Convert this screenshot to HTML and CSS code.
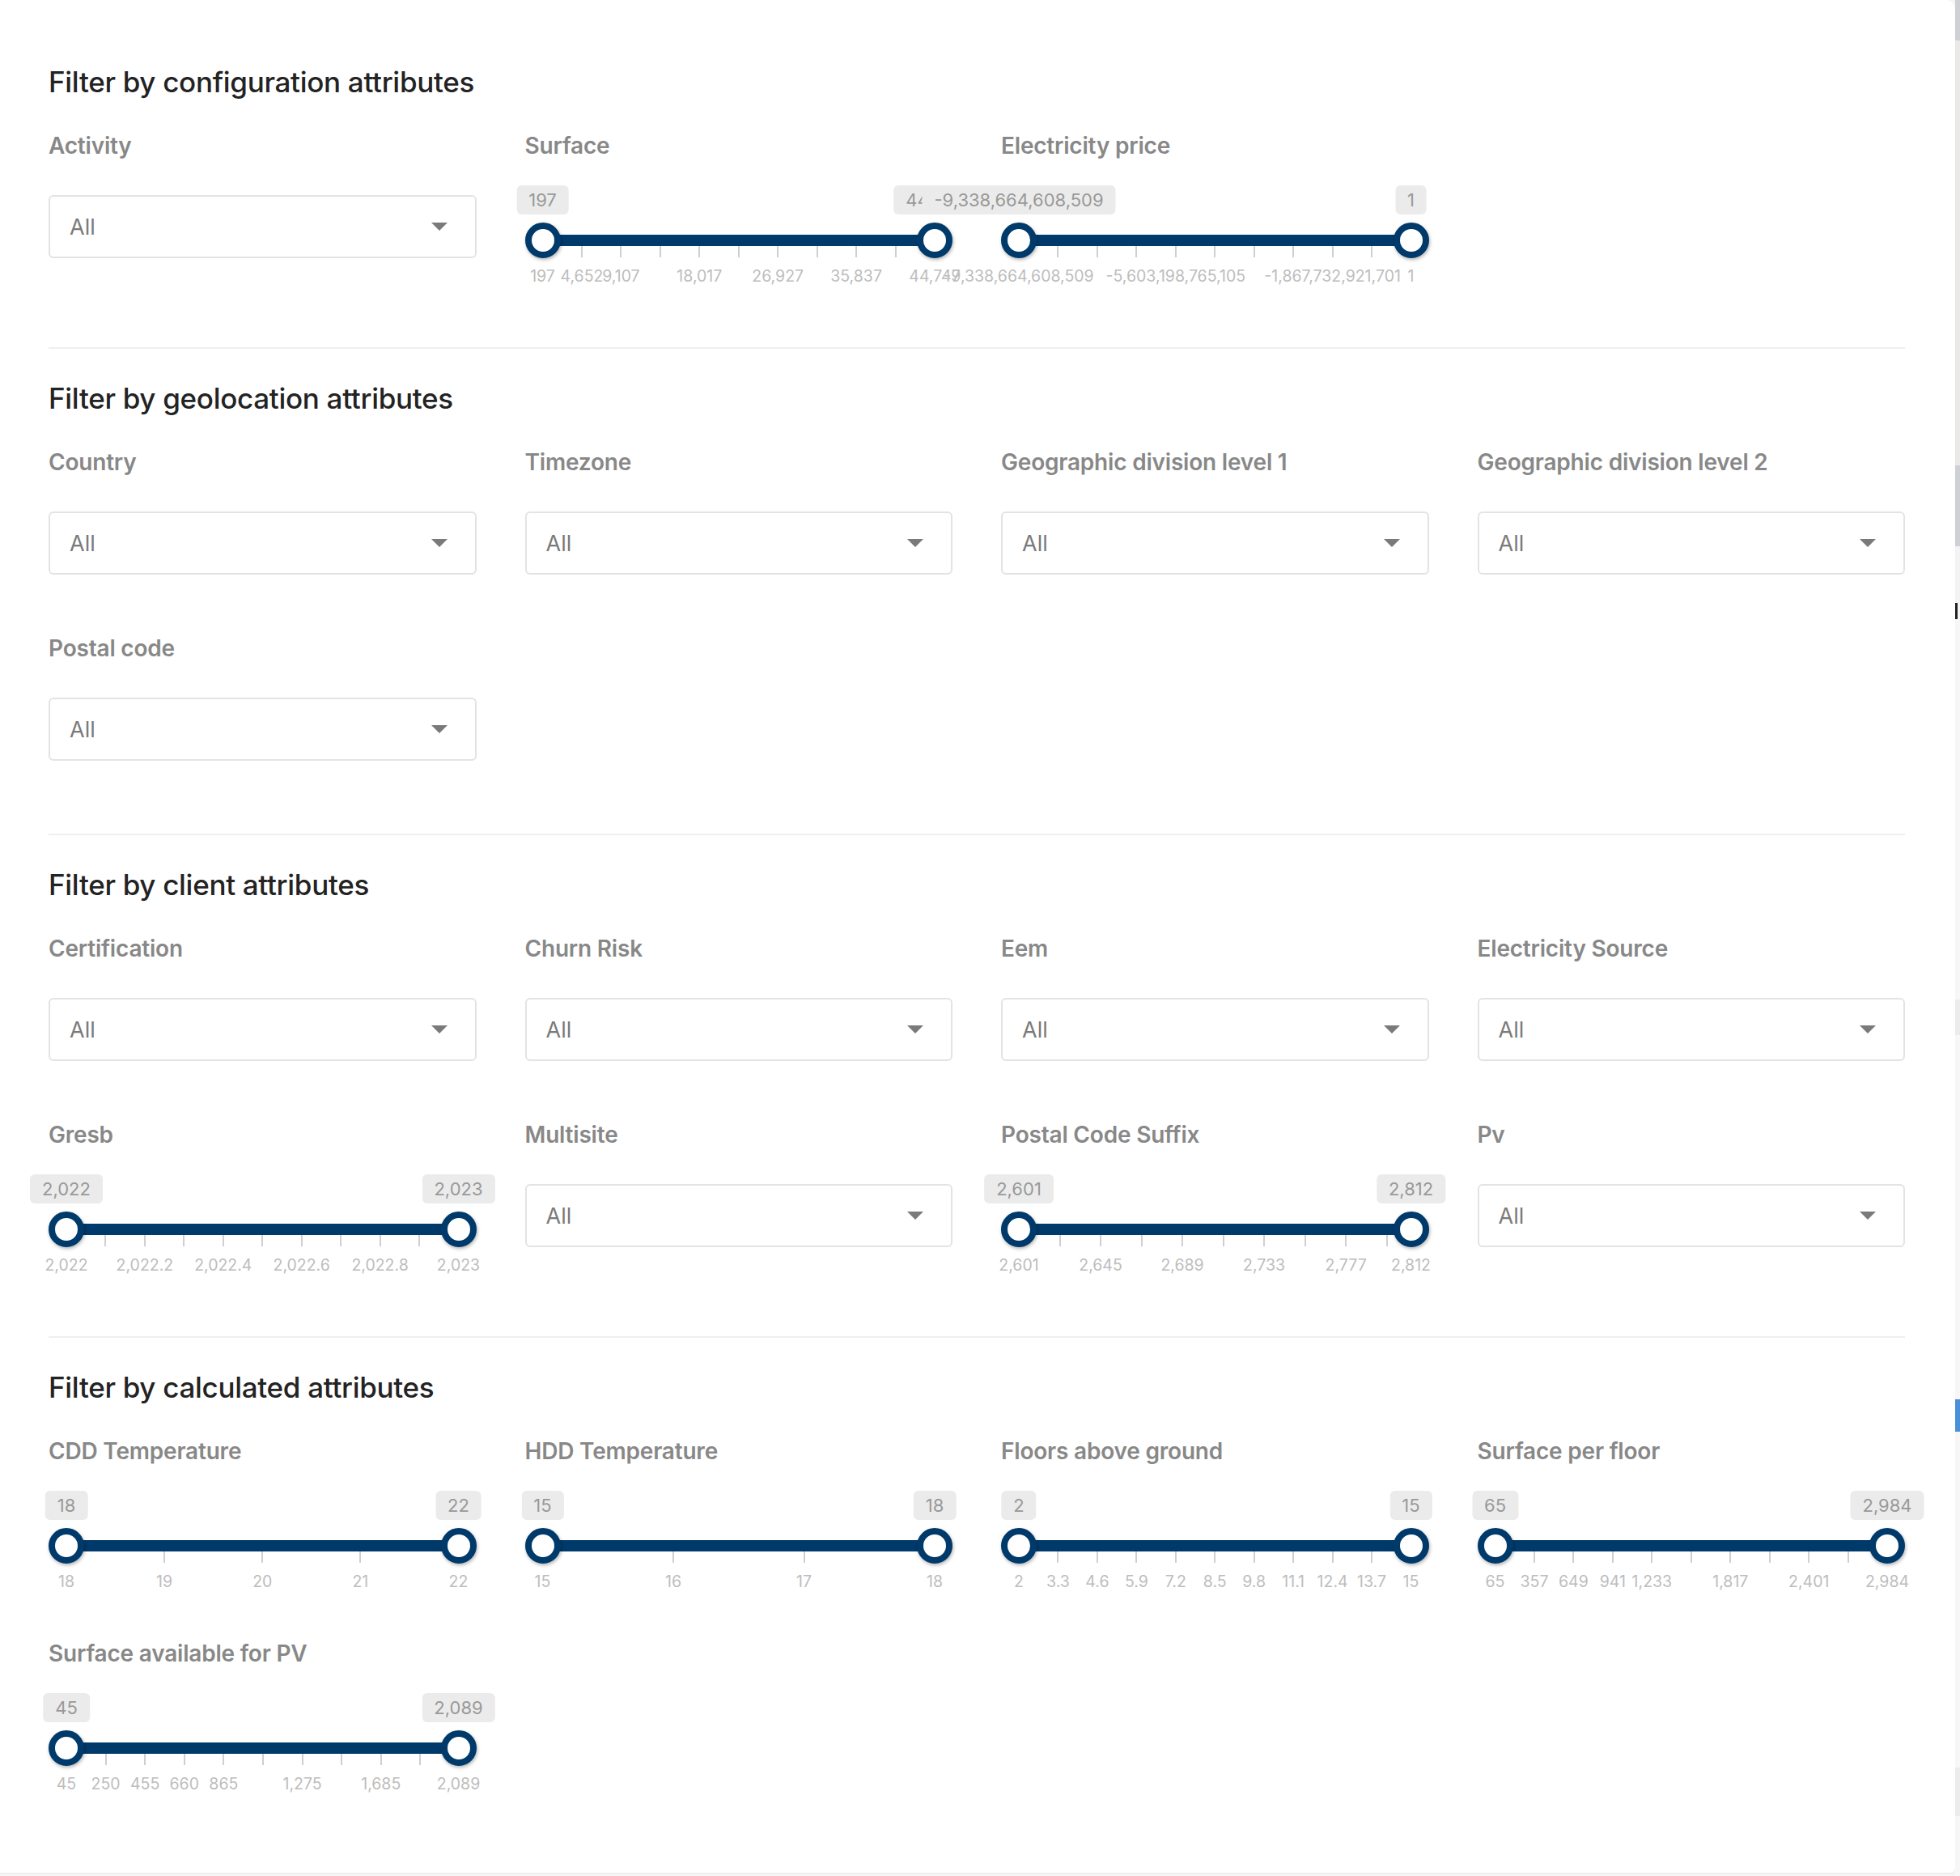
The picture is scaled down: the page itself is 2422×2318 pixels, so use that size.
FILE: index.html
```html
<!DOCTYPE html>
<html lang="en">
<head>
<meta charset="utf-8">
<title>Filters</title>
<link rel="stylesheet" href="styles.css">
</head>
<body>
<div class="page">
<main class="panel">

<section class="group">
  <h2>Filter by configuration attributes</h2>
  <div class="grid">
    <div class="field">
      <div class="label">Activity</div>
      <div class="select"><span>All</span><svg class="caret" width="20" height="10" viewBox="0 0 20 10"><path d="M0 0H20L10 10Z"/></svg></div>
    </div>
    <div class="field">
      <div class="label">Surface</div>
      <div class="slider"><div class="rail"><div class="track"></div>
        <span class="tick" style="left:0%"></span><span class="tick" style="left:10%"></span><span class="tick" style="left:20%"></span><span class="tick" style="left:30%"></span><span class="tick" style="left:40%"></span><span class="tick" style="left:50%"></span><span class="tick" style="left:60%"></span><span class="tick" style="left:70%"></span><span class="tick" style="left:80%"></span><span class="tick" style="left:90%"></span><span class="tick" style="left:100%"></span>
        <span class="mark" style="left:0%">197</span><span class="mark" style="left:10%">4,652</span><span class="mark" style="left:20%">9,107</span><span class="mark" style="left:40%">18,017</span><span class="mark" style="left:60%">26,927</span><span class="mark" style="left:80%">35,837</span><span class="mark" style="left:100%">44,747</span>
        <span class="handle" style="left:0%"></span><span class="handle" style="left:100%"></span>
        <span class="tip" style="left:0%">197</span><span class="tip" style="left:100%">44,747</span>
      </div></div>
    </div>
    <div class="field">
      <div class="label">Electricity price</div>
      <div class="slider"><div class="rail"><div class="track"></div>
        <span class="tick" style="left:0%"></span><span class="tick" style="left:10%"></span><span class="tick" style="left:20%"></span><span class="tick" style="left:30%"></span><span class="tick" style="left:40%"></span><span class="tick" style="left:50%"></span><span class="tick" style="left:60%"></span><span class="tick" style="left:70%"></span><span class="tick" style="left:80%"></span><span class="tick" style="left:90%"></span><span class="tick" style="left:100%"></span>
        <span class="mark" style="left:0%">-9,338,664,608,509</span><span class="mark" style="left:40%">-5,603,198,765,105</span><span class="mark" style="left:80%">-1,867,732,921,701</span><span class="mark" style="left:100%">1</span>
        <span class="handle" style="left:0%"></span><span class="handle" style="left:100%"></span>
        <span class="tip" style="left:0%">-9,338,664,608,509</span><span class="tip" style="left:100%">1</span>
      </div></div>
    </div>
  </div>
</section>

<hr class="divider">

<section class="group">
  <h2>Filter by geolocation attributes</h2>
  <div class="grid">
    <div class="field">
      <div class="label">Country</div>
      <div class="select"><span>All</span><svg class="caret" width="20" height="10" viewBox="0 0 20 10"><path d="M0 0H20L10 10Z"/></svg></div>
    </div>
    <div class="field">
      <div class="label">Timezone</div>
      <div class="select"><span>All</span><svg class="caret" width="20" height="10" viewBox="0 0 20 10"><path d="M0 0H20L10 10Z"/></svg></div>
    </div>
    <div class="field">
      <div class="label">Geographic division level 1</div>
      <div class="select"><span>All</span><svg class="caret" width="20" height="10" viewBox="0 0 20 10"><path d="M0 0H20L10 10Z"/></svg></div>
    </div>
    <div class="field">
      <div class="label">Geographic division level 2</div>
      <div class="select"><span>All</span><svg class="caret" width="20" height="10" viewBox="0 0 20 10"><path d="M0 0H20L10 10Z"/></svg></div>
    </div>
    <div class="field">
      <div class="label">Postal code</div>
      <div class="select"><span>All</span><svg class="caret" width="20" height="10" viewBox="0 0 20 10"><path d="M0 0H20L10 10Z"/></svg></div>
    </div>
  </div>
</section>

<hr class="divider">

<section class="group">
  <h2>Filter by client attributes</h2>
  <div class="grid">
    <div class="field">
      <div class="label">Certification</div>
      <div class="select"><span>All</span><svg class="caret" width="20" height="10" viewBox="0 0 20 10"><path d="M0 0H20L10 10Z"/></svg></div>
    </div>
    <div class="field">
      <div class="label">Churn Risk</div>
      <div class="select"><span>All</span><svg class="caret" width="20" height="10" viewBox="0 0 20 10"><path d="M0 0H20L10 10Z"/></svg></div>
    </div>
    <div class="field">
      <div class="label">Eem</div>
      <div class="select"><span>All</span><svg class="caret" width="20" height="10" viewBox="0 0 20 10"><path d="M0 0H20L10 10Z"/></svg></div>
    </div>
    <div class="field">
      <div class="label">Electricity Source</div>
      <div class="select"><span>All</span><svg class="caret" width="20" height="10" viewBox="0 0 20 10"><path d="M0 0H20L10 10Z"/></svg></div>
    </div>
    <div class="field">
      <div class="label">Gresb</div>
      <div class="slider"><div class="rail"><div class="track"></div>
        <span class="tick" style="left:0%"></span><span class="tick" style="left:10%"></span><span class="tick" style="left:20%"></span><span class="tick" style="left:30%"></span><span class="tick" style="left:40%"></span><span class="tick" style="left:50%"></span><span class="tick" style="left:60%"></span><span class="tick" style="left:70%"></span><span class="tick" style="left:80%"></span><span class="tick" style="left:90%"></span><span class="tick" style="left:100%"></span>
        <span class="mark" style="left:0%">2,022</span><span class="mark" style="left:20%">2,022.2</span><span class="mark" style="left:40%">2,022.4</span><span class="mark" style="left:60%">2,022.6</span><span class="mark" style="left:80%">2,022.8</span><span class="mark" style="left:100%">2,023</span>
        <span class="handle" style="left:0%"></span><span class="handle" style="left:100%"></span>
        <span class="tip" style="left:0%">2,022</span><span class="tip" style="left:100%">2,023</span>
      </div></div>
    </div>
    <div class="field">
      <div class="label">Multisite</div>
      <div class="select"><span>All</span><svg class="caret" width="20" height="10" viewBox="0 0 20 10"><path d="M0 0H20L10 10Z"/></svg></div>
    </div>
    <div class="field">
      <div class="label">Postal Code Suffix</div>
      <div class="slider"><div class="rail"><div class="track"></div>
        <span class="tick" style="left:0%"></span><span class="tick" style="left:10.427%"></span><span class="tick" style="left:20.853%"></span><span class="tick" style="left:31.28%"></span><span class="tick" style="left:41.706%"></span><span class="tick" style="left:52.133%"></span><span class="tick" style="left:62.559%"></span><span class="tick" style="left:72.986%"></span><span class="tick" style="left:83.412%"></span><span class="tick" style="left:93.839%"></span><span class="tick" style="left:100%"></span>
        <span class="mark" style="left:0%">2,601</span><span class="mark" style="left:20.853%">2,645</span><span class="mark" style="left:41.706%">2,689</span><span class="mark" style="left:62.559%">2,733</span><span class="mark" style="left:83.412%">2,777</span><span class="mark" style="left:100%">2,812</span>
        <span class="handle" style="left:0%"></span><span class="handle" style="left:100%"></span>
        <span class="tip" style="left:0%">2,601</span><span class="tip" style="left:100%">2,812</span>
      </div></div>
    </div>
    <div class="field">
      <div class="label">Pv</div>
      <div class="select"><span>All</span><svg class="caret" width="20" height="10" viewBox="0 0 20 10"><path d="M0 0H20L10 10Z"/></svg></div>
    </div>
  </div>
</section>

<hr class="divider">

<section class="group">
  <h2>Filter by calculated attributes</h2>
  <div class="grid">
    <div class="field">
      <div class="label">CDD Temperature</div>
      <div class="slider"><div class="rail"><div class="track"></div>
        <span class="tick" style="left:0%"></span><span class="tick" style="left:25%"></span><span class="tick" style="left:50%"></span><span class="tick" style="left:75%"></span><span class="tick" style="left:100%"></span>
        <span class="mark" style="left:0%">18</span><span class="mark" style="left:25%">19</span><span class="mark" style="left:50%">20</span><span class="mark" style="left:75%">21</span><span class="mark" style="left:100%">22</span>
        <span class="handle" style="left:0%"></span><span class="handle" style="left:100%"></span>
        <span class="tip" style="left:0%">18</span><span class="tip" style="left:100%">22</span>
      </div></div>
    </div>
    <div class="field">
      <div class="label">HDD Temperature</div>
      <div class="slider"><div class="rail"><div class="track"></div>
        <span class="tick" style="left:0%"></span><span class="tick" style="left:33.333%"></span><span class="tick" style="left:66.667%"></span><span class="tick" style="left:100%"></span>
        <span class="mark" style="left:0%">15</span><span class="mark" style="left:33.333%">16</span><span class="mark" style="left:66.667%">17</span><span class="mark" style="left:100%">18</span>
        <span class="handle" style="left:0%"></span><span class="handle" style="left:100%"></span>
        <span class="tip" style="left:0%">15</span><span class="tip" style="left:100%">18</span>
      </div></div>
    </div>
    <div class="field">
      <div class="label">Floors above ground</div>
      <div class="slider"><div class="rail"><div class="track"></div>
        <span class="tick" style="left:0%"></span><span class="tick" style="left:10%"></span><span class="tick" style="left:20%"></span><span class="tick" style="left:30%"></span><span class="tick" style="left:40%"></span><span class="tick" style="left:50%"></span><span class="tick" style="left:60%"></span><span class="tick" style="left:70%"></span><span class="tick" style="left:80%"></span><span class="tick" style="left:90%"></span><span class="tick" style="left:100%"></span>
        <span class="mark" style="left:0%">2</span><span class="mark" style="left:10%">3.3</span><span class="mark" style="left:20%">4.6</span><span class="mark" style="left:30%">5.9</span><span class="mark" style="left:40%">7.2</span><span class="mark" style="left:50%">8.5</span><span class="mark" style="left:60%">9.8</span><span class="mark" style="left:70%">11.1</span><span class="mark" style="left:80%">12.4</span><span class="mark" style="left:90%">13.7</span><span class="mark" style="left:100%">15</span>
        <span class="handle" style="left:0%"></span><span class="handle" style="left:100%"></span>
        <span class="tip" style="left:0%">2</span><span class="tip" style="left:100%">15</span>
      </div></div>
    </div>
    <div class="field">
      <div class="label">Surface per floor</div>
      <div class="slider"><div class="rail"><div class="track"></div>
        <span class="tick" style="left:0%"></span><span class="tick" style="left:10.003%"></span><span class="tick" style="left:20.007%"></span><span class="tick" style="left:30.01%"></span><span class="tick" style="left:40.014%"></span><span class="tick" style="left:50.017%"></span><span class="tick" style="left:60.021%"></span><span class="tick" style="left:70.024%"></span><span class="tick" style="left:80.027%"></span><span class="tick" style="left:90.031%"></span><span class="tick" style="left:100%"></span>
        <span class="mark" style="left:0%">65</span><span class="mark" style="left:10.003%">357</span><span class="mark" style="left:20.007%">649</span><span class="mark" style="left:30.01%">941</span><span class="mark" style="left:40.014%">1,233</span><span class="mark" style="left:60.021%">1,817</span><span class="mark" style="left:80.027%">2,401</span><span class="mark" style="left:100%">2,984</span>
        <span class="handle" style="left:0%"></span><span class="handle" style="left:100%"></span>
        <span class="tip" style="left:0%">65</span><span class="tip" style="left:100%">2,984</span>
      </div></div>
    </div>
    <div class="field">
      <div class="label">Surface available for PV</div>
      <div class="slider"><div class="rail"><div class="track"></div>
        <span class="tick" style="left:0%"></span><span class="tick" style="left:10.029%"></span><span class="tick" style="left:20.059%"></span><span class="tick" style="left:30.088%"></span><span class="tick" style="left:40.117%"></span><span class="tick" style="left:50.147%"></span><span class="tick" style="left:60.176%"></span><span class="tick" style="left:70.205%"></span><span class="tick" style="left:80.235%"></span><span class="tick" style="left:90.264%"></span><span class="tick" style="left:100%"></span>
        <span class="mark" style="left:0%">45</span><span class="mark" style="left:10.029%">250</span><span class="mark" style="left:20.059%">455</span><span class="mark" style="left:30.088%">660</span><span class="mark" style="left:40.117%">865</span><span class="mark" style="left:60.176%">1,275</span><span class="mark" style="left:80.235%">1,685</span><span class="mark" style="left:100%">2,089</span>
        <span class="handle" style="left:0%"></span><span class="handle" style="left:100%"></span>
        <span class="tip" style="left:0%">45</span><span class="tip" style="left:100%">2,089</span>
      </div></div>
    </div>
  </div>
</section>

</main>
<aside class="backdrop">
  <div class="bd-top"></div>
  <div class="bd-map"></div>
  <div class="bd-top2"></div>
  <div class="bd-light"></div>
  <div class="bd-glyph"></div>
  <div class="bd-rest"><div class="bd-band"></div><div class="bd-blue"></div><div class="bd-band2"></div></div>
</aside>
</div>
</body>
</html>
```

FILE: styles.css
```css
* { box-sizing: border-box; }

html, body {
  margin: 0;
  padding: 0;
}

body {
  width: 2422px;
  height: 2318px;
  overflow: hidden;
  background: #f5f5f5;
  font-family: Inter, "Noto Sans", "Liberation Sans", sans-serif;
}

.page {
  display: flex;
  width: 2422px;
  height: 2318px;
}

.panel {
  flex: 0 0 2416px;
  height: 2314px;
  background: #fff;
  border-radius: 0 12px 6px 0;
  padding: 79px 62px 0 60px;
  box-shadow: 0 1px 1px rgba(0, 0, 0, 0.06);
  position: relative;
  z-index: 1;
}

.group h2 {
  margin: 0;
  font-size: 35px;
  line-height: 44px;
  font-weight: 500;
  color: #232323;
  letter-spacing: -0.3px;
}

.grid {
  display: grid;
  grid-template-columns: repeat(4, 1fr);
  column-gap: 60px;
  row-gap: 73px;
  margin-top: 39px;
}

.label {
  font-size: 28px;
  line-height: 36px;
  font-weight: 600;
  color: #888888;
  margin-bottom: 43px;
  letter-spacing: -0.2px;
}

.select {
  height: 78px;
  border: 2px solid #e3e3e3;
  border-radius: 6px;
  display: flex;
  align-items: center;
  justify-content: space-between;
  padding: 0 34px 0 24px;
  font-size: 27px;
  color: #7a7a7a;
  background: #fff;
}

.caret path { fill: #7a7a7a; }

.slider {
  height: 98px;
  padding: 0 22px;
}

.rail {
  position: relative;
  height: 100%;
  padding-top: 49px;
}

.track {
  height: 14px;
  background: #003a6b;
}

.tick {
  position: absolute;
  top: 63px;
  width: 2px;
  height: 14px;
  margin-left: -1px;
  background: #cfcfcf;
}

.mark {
  position: absolute;
  top: 88px;
  transform: translateX(-50%);
  font-size: 19.5px;
  line-height: 24px;
  color: #bdbdbd;
  white-space: nowrap;
}

.handle {
  position: absolute;
  top: 34px;
  width: 44px;
  height: 44px;
  margin-left: -22px;
  border: 8px solid #003a6b;
  border-radius: 50%;
  background: #fff;
  box-shadow: 1px 2px 4px rgba(0, 0, 0, 0.3);
  z-index: 1;
}

.tip {
  position: absolute;
  top: -12px;
  height: 36px;
  line-height: 36px;
  padding: 0 15px;
  transform: translateX(-50%);
  background: #ebebeb;
  border-radius: 6px;
  font-size: 22px;
  color: #999999;
  white-space: nowrap;
  z-index: 2;
}

.divider {
  border: 0;
  height: 2px;
  background: #efefef;
  margin: 90px 0 39px;
}

.backdrop {
  flex: 1;
  display: flex;
  flex-direction: column;
}

.bd-top { height: 50px; background: #cdd1d5; }
.bd-map { height: 525px; background: #ece8e8; }
.bd-top2 { height: 100px; background: #cdd1d5; }
.bd-light { height: 70px; background: #f3f3f3; }
.bd-glyph { height: 20px; width: 3px; background: #222; }
.bd-rest { flex: 1; background: #f7f7f7; display: flex; flex-direction: column; }
.bd-band { height: 44px; margin-top: 470px; background: #ececec; }
.bd-blue { height: 40px; margin-top: 450px; background: #4a90d9; }
.bd-band2 { height: 60px; margin-top: 415px; background: #ececec; }
```
